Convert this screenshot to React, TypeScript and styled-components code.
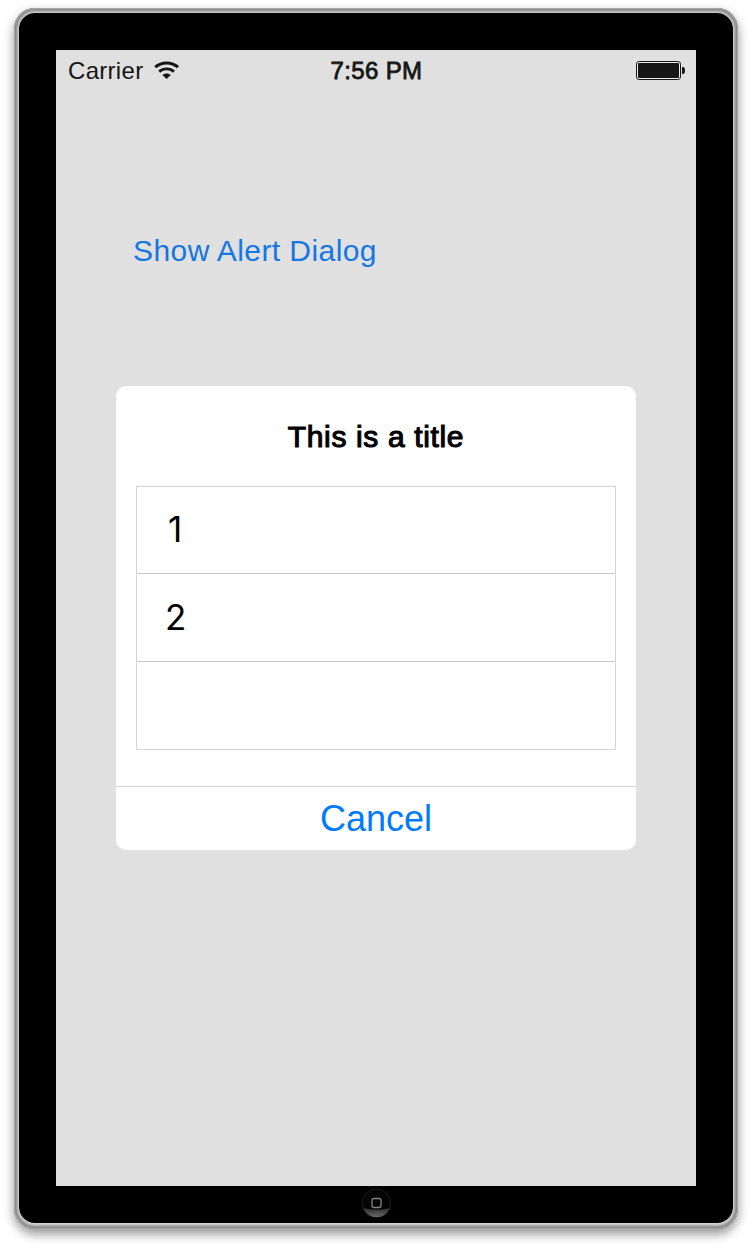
import React from "react";
import styled, { createGlobalStyle } from "styled-components";

const GlobalStyle = createGlobalStyle`
  * { box-sizing: border-box; }
  html, body { margin: 0; background: #fff; }
  body { font-family: "Liberation Sans", Arial, sans-serif; overflow: hidden; }
`;

const Stage = styled.div`
  width: 752px;
  height: 1248px;
  padding: 8px 14px 19px;
`;

const Device = styled.div`
  width: 724px;
  height: 1221px;
  border-radius: 21px;
  padding: 42px;
  background: #000;
  box-shadow:
    inset 0 0 0 1px #a6a6a6,
    inset 0 0 0 2px #8c8c8c,
    inset 0 0 0 3px #9c9c9c,
    inset 0 0 0 4px #b0b0b0,
    inset 0 0 0 5px #c8c8c8,
    inset 0 -1px 0 5px #d0d0d0,
    0 5px 11px rgba(0, 0, 0, 0.42);
`;

const Screen = styled.main`
  width: 640px;
  height: 1136px;
  display: flex;
  flex-direction: column;
  background: #e0e0e0;
`;

const StatusBar = styled.header`
  height: 40px;
  padding: 0 11px 0 12px;
  display: grid;
  grid-template-columns: 1fr auto 1fr;
  align-items: center;
  color: #161616;
  font-size: 24px;
  line-height: 40px;
`;

const Carrier = styled.div`
  display: flex;
  align-items: center;
  gap: 10.5px;
  letter-spacing: 0.3px;
`;

const Clock = styled.time`
  font-size: 24px;
  letter-spacing: 0.35px;
  -webkit-text-stroke: 0.8px currentColor;
  padding-top: 1px;
`;

const BatterySlot = styled.div`
  display: flex;
  justify-content: flex-end;
`;

const ShowButton = styled.button`
  align-self: flex-start;
  margin: 140px 0 0 77px;
  padding: 0;
  border: 0;
  background: none;
  height: 40px;
  font: 30px/39px "Liberation Sans", Arial, sans-serif;
  letter-spacing: 0.42px;
  color: #1676e2;
`;

const Dialog = styled.section`
  width: 520px;
  height: 464px;
  margin: 116px auto 0;
  border-radius: 10px;
  background: #fefefe;
  display: flex;
  flex-direction: column;
`;

const Title = styled.h1`
  margin: 0;
  height: 100px;
  font-size: 30px;
  font-weight: 400;
  letter-spacing: 0.64px;
  -webkit-text-stroke: 1.1px currentColor;
  line-height: 102px;
  text-align: center;
  color: #000;
`;

const List = styled.ul`
  list-style: none;
  margin: 0 20px;
  padding: 0;
  height: 264px;
  border: 1px solid #d4d4d4;
  background: #fff;
`;

const Item = styled.li<{ $indent: number }>`
  height: 88px;
  padding: 0 ${(p) => p.$indent}px;
  border-bottom: 1px solid #c8c7cc;
  font-family: Inter, "Liberation Sans", sans-serif;
  font-size: 35px;
  line-height: 86px;
  color: #000;

  &:first-child { height: 87px; line-height: 85px; }
  &:last-child { border-bottom: 0; height: 87px; }
`;

const CancelButton = styled.button`
  margin-top: auto;
  height: 64px;
  padding: 0;
  border: 0;
  border-top: 1px solid #d4d4d4;
  background: none;
  font: 36px/64px "Liberation Sans", Arial, sans-serif;
  color: #007aff;
`;

const HomeButton = styled.div`
  display: flex;
  justify-content: center;
  margin-top: 2px;
`;

const WifiIcon = () => (
  <svg width="26" height="20" viewBox="0 0 26 20" fill="none" stroke="#161616">
    <path d="M1.2 6.2C7.6 0.6 17.6 0.6 24 6.2" strokeWidth="3.1" />
    <path d="M5.2 10.6C9.4 6.9 15.8 6.9 20 10.6" strokeWidth="2.9" />
    <path d="M8.4 14C10.8 12 14.4 12 16.8 14L12.6 18Z" fill="#161616" stroke="none" />
  </svg>
);

const BatteryIcon = () => (
  <svg width="49" height="19" viewBox="0 0 49 19">
    <rect x="0.5" y="0.5" width="44" height="18" rx="2.6" fill="#eee" stroke="#161616" />
    <rect x="2" y="2" width="41" height="15" rx="1" fill="#161616" />
    <path d="M46 6h1q2 0 2 3.5t-2 3.5h-1z" fill="#161616" />
  </svg>
);

const HomeIcon = () => (
  <svg width="30" height="30" viewBox="0 0 30 30">
    <defs>
      <linearGradient id="gloss" x1="0" y1="0" x2="0" y2="1">
        <stop offset="0" stopColor="#2c2c2c" />
        <stop offset="1" stopColor="#686868" />
      </linearGradient>
    </defs>
    <circle cx="15.5" cy="15" r="14" fill="#030303" stroke="#1c1c1c" />
    <path d="M2 20Q15.5 23.5 29 20A14.5 14.5 0 0 1 2 20Z" fill="url(#gloss)" />
    <rect x="11" y="10.5" width="9" height="9" rx="2" fill="none" stroke="#858585" strokeWidth="1.3" />
  </svg>
);

const items = [
  { label: "1", indent: 31 },
  { label: "2", indent: 28 },
  { label: "", indent: 28 },
];

export default function App() {
  return (
    <>
      <GlobalStyle />
      <Stage>
        <Device>
          <Screen>
            <StatusBar>
              <Carrier>
                Carrier
                <WifiIcon />
              </Carrier>
              <Clock>7:56 PM</Clock>
              <BatterySlot>
                <BatteryIcon />
              </BatterySlot>
            </StatusBar>
            <ShowButton>Show Alert Dialog</ShowButton>
            <Dialog>
              <Title>This is a title</Title>
              <List>
                {items.map((item, i) => (
                  <Item key={i} $indent={item.indent}>{item.label}</Item>
                ))}
              </List>
              <CancelButton>Cancel</CancelButton>
            </Dialog>
          </Screen>
          <HomeButton>
            <HomeIcon />
          </HomeButton>
        </Device>
      </Stage>
    </>
  );
}
